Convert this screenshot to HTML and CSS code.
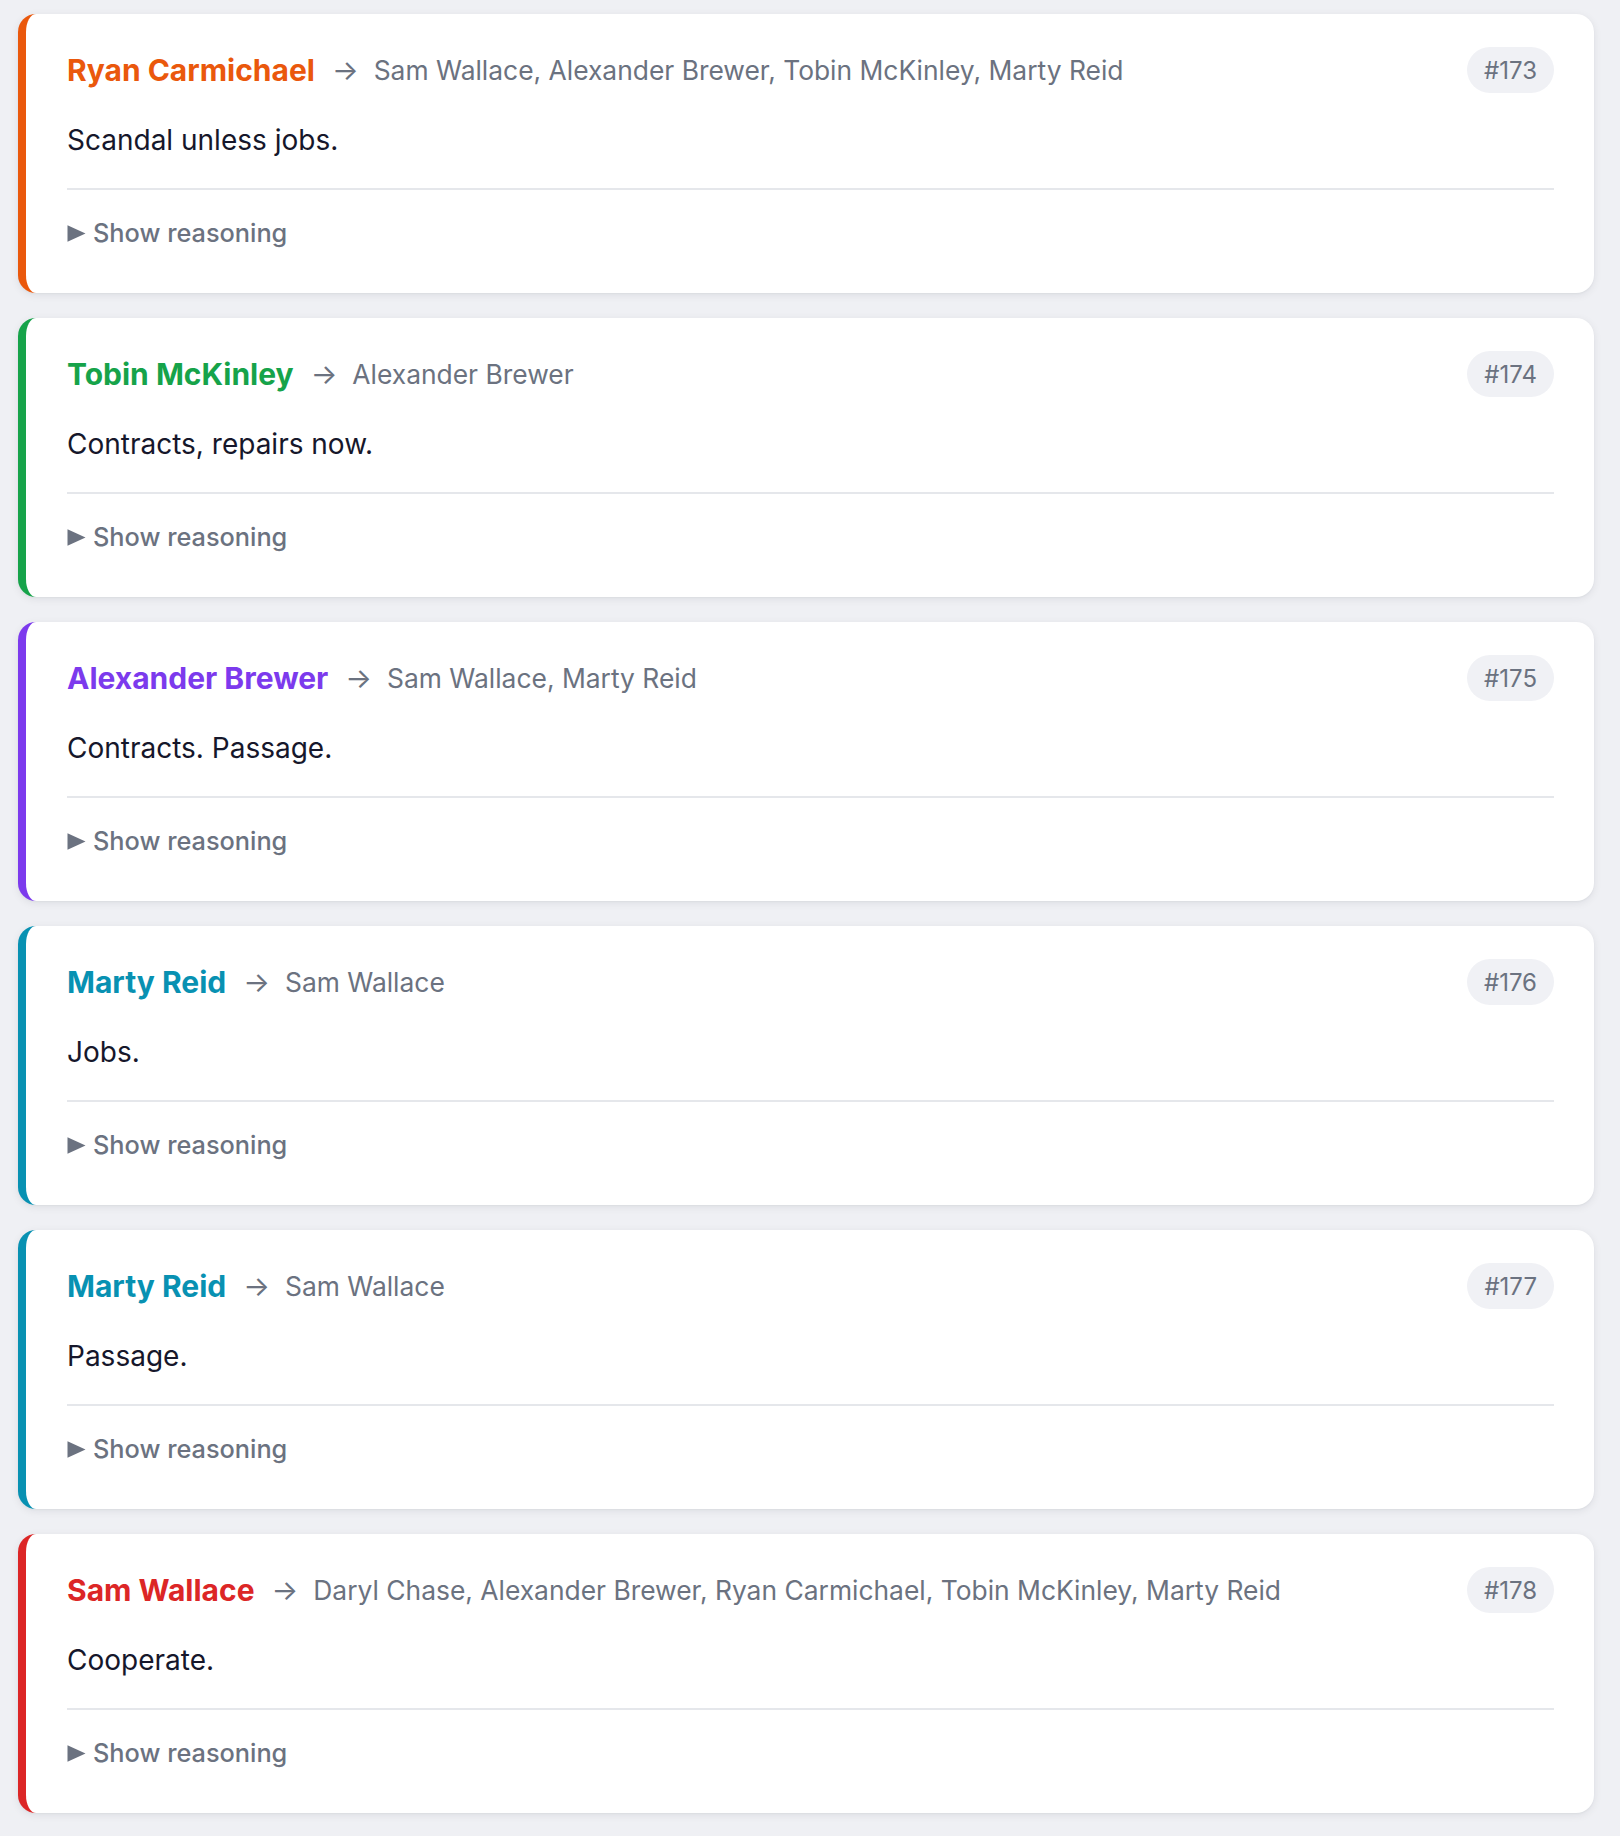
FILE: index.html
```html
<!DOCTYPE html>
<html lang="en">
<head>
<meta charset="utf-8">
<title>Messages</title>
<link rel="stylesheet" href="styles.css">
</head>
<body>
<main class="feed">
  <article class="card c-orange">
    <header class="card-head">
      <span class="sender">Ryan Carmichael</span>
      <span class="arrow">→</span>
      <span class="recipients">Sam Wallace, Alexander Brewer, Tobin McKinley, Marty Reid</span>
      <span class="badge">#173</span>
    </header>
    <p class="message">Scandal unless jobs.</p>
    <details class="reasoning">
      <summary><svg class="tri" viewBox="0 0 19 17" width="19" height="17"><path d="M0.5 0.3 L18.5 8.5 L0.5 16.7 Z"/></svg>Show reasoning</summary>
    </details>
  </article>

  <article class="card c-green">
    <header class="card-head">
      <span class="sender">Tobin McKinley</span>
      <span class="arrow">→</span>
      <span class="recipients">Alexander Brewer</span>
      <span class="badge">#174</span>
    </header>
    <p class="message">Contracts, repairs now.</p>
    <details class="reasoning">
      <summary><svg class="tri" viewBox="0 0 19 17" width="19" height="17"><path d="M0.5 0.3 L18.5 8.5 L0.5 16.7 Z"/></svg>Show reasoning</summary>
    </details>
  </article>

  <article class="card c-purple">
    <header class="card-head">
      <span class="sender">Alexander Brewer</span>
      <span class="arrow">→</span>
      <span class="recipients">Sam Wallace, Marty Reid</span>
      <span class="badge">#175</span>
    </header>
    <p class="message">Contracts. Passage.</p>
    <details class="reasoning">
      <summary><svg class="tri" viewBox="0 0 19 17" width="19" height="17"><path d="M0.5 0.3 L18.5 8.5 L0.5 16.7 Z"/></svg>Show reasoning</summary>
    </details>
  </article>

  <article class="card c-cyan">
    <header class="card-head">
      <span class="sender">Marty Reid</span>
      <span class="arrow">→</span>
      <span class="recipients">Sam Wallace</span>
      <span class="badge">#176</span>
    </header>
    <p class="message">Jobs.</p>
    <details class="reasoning">
      <summary><svg class="tri" viewBox="0 0 19 17" width="19" height="17"><path d="M0.5 0.3 L18.5 8.5 L0.5 16.7 Z"/></svg>Show reasoning</summary>
    </details>
  </article>

  <article class="card c-cyan">
    <header class="card-head">
      <span class="sender">Marty Reid</span>
      <span class="arrow">→</span>
      <span class="recipients">Sam Wallace</span>
      <span class="badge">#177</span>
    </header>
    <p class="message">Passage.</p>
    <details class="reasoning">
      <summary><svg class="tri" viewBox="0 0 19 17" width="19" height="17"><path d="M0.5 0.3 L18.5 8.5 L0.5 16.7 Z"/></svg>Show reasoning</summary>
    </details>
  </article>

  <article class="card c-red">
    <header class="card-head">
      <span class="sender">Sam Wallace</span>
      <span class="arrow">→</span>
      <span class="recipients">Daryl Chase, Alexander Brewer, Ryan Carmichael, Tobin McKinley, Marty Reid</span>
      <span class="badge">#178</span>
    </header>
    <p class="message">Cooperate.</p>
    <details class="reasoning">
      <summary><svg class="tri" viewBox="0 0 19 17" width="19" height="17"><path d="M0.5 0.3 L18.5 8.5 L0.5 16.7 Z"/></svg>Show reasoning</summary>
    </details>
  </article>
</main>
</body>
</html>
```

FILE: styles.css
```css
html, body {
  margin: 0;
  padding: 0;
}
body {
  background: #eff0f4;
  font-family: Inter, "Noto Sans", "Liberation Sans", sans-serif;
  color: #111827;
}
.feed {
  display: flex;
  flex-direction: column;
  gap: 25px;
  padding: 14px 26px 22px 18px;
}
.card {
  background: #ffffff;
  border-left: 8px solid #999;
  border-radius: 18px;
  padding: 33px 40px 42px 41px;
  box-shadow: 0 2px 8px rgba(17, 24, 39, 0.08), 0 1px 2px rgba(17, 24, 39, 0.04);
  height: 279px;
  box-sizing: border-box;
}
.c-orange { border-left-color: #ea580c; }
.c-orange .sender { color: #ea580c; }
.c-green { border-left-color: #16a34a; }
.c-green .sender { color: #16a34a; }
.c-purple { border-left-color: #7c3aed; }
.c-purple .sender { color: #7c3aed; }
.c-cyan { border-left-color: #0891b2; }
.c-cyan .sender { color: #0891b2; }
.c-red { border-left-color: #dc2626; }
.c-red .sender { color: #dc2626; }

.card-head {
  display: flex;
  align-items: center;
  height: 46px;
}
.sender {
  font-size: 30px;
  font-weight: 700;
}
.arrow {
  color: #6b7280;
  font-size: 28px;
  margin: 0 15px 0 17px;
}
.recipients {
  color: #6b7280;
  font-size: 26.4px;
  flex: 1;
}
.badge {
  background: #f0f1f5;
  color: #6b7280;
  font-size: 24px;
  height: 46px;
  padding: 0 17px;
  border-radius: 23px;
  display: flex;
  align-items: center;
}
.message {
  margin: 29px 0 0 0;
  font-size: 28px;
  line-height: 36px;
  color: #16172b;
  padding-bottom: 30px;
  border-bottom: 2px solid #e5e7eb;
}
.reasoning {
  margin-top: 25px;
}
.reasoning summary {
  list-style: none;
  display: flex;
  align-items: center;
  gap: 7px;
  font-size: 25.3px;
  line-height: 36px;
  font-weight: 500;
  color: #6b7280;
  cursor: pointer;
}
.reasoning summary::-webkit-details-marker {
  display: none;
}
.tri {
  fill: #6b7280;
  flex: none;
}
```
